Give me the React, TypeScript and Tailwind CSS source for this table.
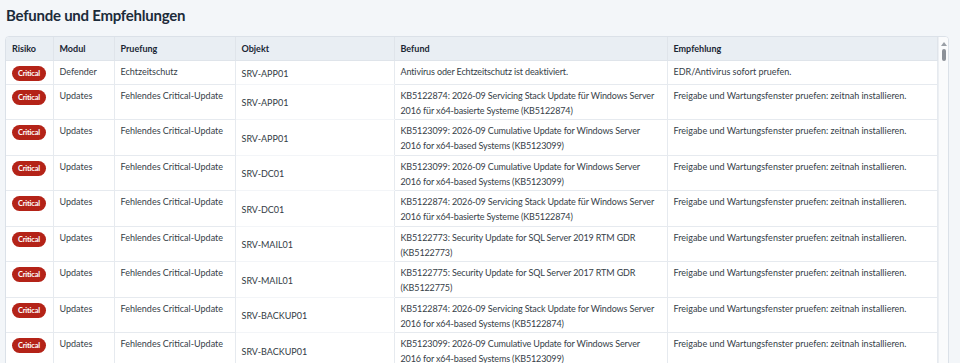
type Finding = {
  modul: string;
  pruefung: string;
  objekt: string;
  befund: string;
  empfehlung: string;
};

const findings: Finding[] = [
  {
    modul: "Defender",
    pruefung: "Echtzeitschutz",
    objekt: "SRV-APP01",
    befund: "Antivirus oder Echtzeitschutz ist deaktiviert.",
    empfehlung: "EDR/Antivirus sofort pruefen.",
  },
  {
    modul: "Updates",
    pruefung: "Fehlendes Critical-Update",
    objekt: "SRV-APP01",
    befund: "KB5122874: 2026-09 Servicing Stack Update für Windows Server 2016 für x64-basierte Systeme (KB5122874)",
    empfehlung: "Freigabe und Wartungsfenster pruefen: zeitnah installieren.",
  },
  {
    modul: "Updates",
    pruefung: "Fehlendes Critical-Update",
    objekt: "SRV-APP01",
    befund: "KB5123099: 2026-09 Cumulative Update for Windows Server 2016 for x64-based Systems (KB5123099)",
    empfehlung: "Freigabe und Wartungsfenster pruefen: zeitnah installieren.",
  },
  {
    modul: "Updates",
    pruefung: "Fehlendes Critical-Update",
    objekt: "SRV-DC01",
    befund: "KB5123099: 2026-09 Cumulative Update for Windows Server 2016 for x64-based Systems (KB5123099)",
    empfehlung: "Freigabe und Wartungsfenster pruefen: zeitnah installieren.",
  },
  {
    modul: "Updates",
    pruefung: "Fehlendes Critical-Update",
    objekt: "SRV-DC01",
    befund: "KB5122874: 2026-09 Servicing Stack Update für Windows Server 2016 für x64-basierte Systeme (KB5122874)",
    empfehlung: "Freigabe und Wartungsfenster pruefen: zeitnah installieren.",
  },
  {
    modul: "Updates",
    pruefung: "Fehlendes Critical-Update",
    objekt: "SRV-MAIL01",
    befund: "KB5122773: Security Update for SQL Server 2019 RTM GDR (KB5122773)",
    empfehlung: "Freigabe und Wartungsfenster pruefen: zeitnah installieren.",
  },
  {
    modul: "Updates",
    pruefung: "Fehlendes Critical-Update",
    objekt: "SRV-MAIL01",
    befund: "KB5122775: Security Update for SQL Server 2017 RTM GDR (KB5122775)",
    empfehlung: "Freigabe und Wartungsfenster pruefen: zeitnah installieren.",
  },
  {
    modul: "Updates",
    pruefung: "Fehlendes Critical-Update",
    objekt: "SRV-BACKUP01",
    befund: "KB5122874: 2026-09 Servicing Stack Update for Windows Server 2016 for x64-based Systems (KB5122874)",
    empfehlung: "Freigabe und Wartungsfenster pruefen: zeitnah installieren.",
  },
  {
    modul: "Updates",
    pruefung: "Fehlendes Critical-Update",
    objekt: "SRV-BACKUP01",
    befund: "KB5123099: 2026-09 Cumulative Update for Windows Server 2016 for x64-based Systems (KB5123099)",
    empfehlung: "Freigabe und Wartungsfenster pruefen: zeitnah installieren.",
  },
];

const th = "px-[6px] py-[4px] text-left font-bold border-r border-b border-[#dfe4ea]";
const td = "px-[6px] pt-[3px] pb-[1.5px] align-top border-r border-b border-[#e6eaef]";

const App = () => {
  return (
    <div className="h-[363px] overflow-hidden bg-[#f3f6f9] font-['Lato',sans-serif] text-[9px] leading-[15px] text-[#363e48]">
      <h1 className="px-[6px] pt-[4px] pb-[10px] text-[15px] leading-[22px] font-bold tracking-[-0.25px] text-[#1c2b3a]">
        Befunde und Empfehlungen
      </h1>
      <div className="ml-[5px] mr-[11px] flex border border-[#dbe1e8] rounded-t-sm bg-white overflow-hidden">
        <table className="table-fixed border-collapse w-[931px] shrink-0">
          <colgroup>
            <col className="w-[47px]" />
            <col className="w-[61px]" />
            <col className="w-[121px]" />
            <col className="w-[159px]" />
            <col className="w-[273px]" />
            <col className="w-[270px]" />
          </colgroup>
          <thead>
            <tr className="bg-[#e9eef3] text-[#1a2634]">
              <th className={th}>Risiko</th>
              <th className={th}>Modul</th>
              <th className={th}>Pruefung</th>
              <th className={th + " border-l border-l-[#cdd5de]"}>Objekt</th>
              <th className={th}>Befund</th>
              <th className={th}>Empfehlung</th>
            </tr>
          </thead>
          <tbody>
            {findings.map((f, i) => (
              <tr key={i} className="bg-white">
                <td className={td}>
                  <div className="h-[18px] pt-[1px]">
                    <span className="inline-flex h-[15px] w-[34px] items-center justify-center rounded-full bg-[#b42318] text-[7.5px] font-bold leading-none text-white tracking-[-0.2px]">
                      Critical
                    </span>
                  </div>
                </td>
                <td className={td}>{f.modul}</td>
                <td className={td}>{f.pruefung}</td>
                <td className="px-[6px] pt-[3px] pb-[1.5px] align-middle border-l border-l-[#cdd5de] border-r border-[#e6eaef] border-b border-b-[#f3f5f8] text-[#333b45]">
                  {f.objekt}
                </td>
                <td className={td + " tracking-[-0.13px]"}>{f.befund}</td>
                <td className={td}>{f.empfehlung}</td>
              </tr>
            ))}
          </tbody>
        </table>
        <div className="w-[12px] shrink-0 flex flex-col items-center bg-[#fafbfc] border-l border-[#eceff3] pt-[5px]">
          <svg width="6" height="4" viewBox="0 0 6 4">
            <path d="M3 0 L6 4 L0 4 Z" fill="#9a9fa6" />
          </svg>
          <div className="mt-[3px] h-[12px] w-[4px] rounded-full bg-[#8c9198]" />
        </div>
      </div>
    </div>
  );
};

export default App;
